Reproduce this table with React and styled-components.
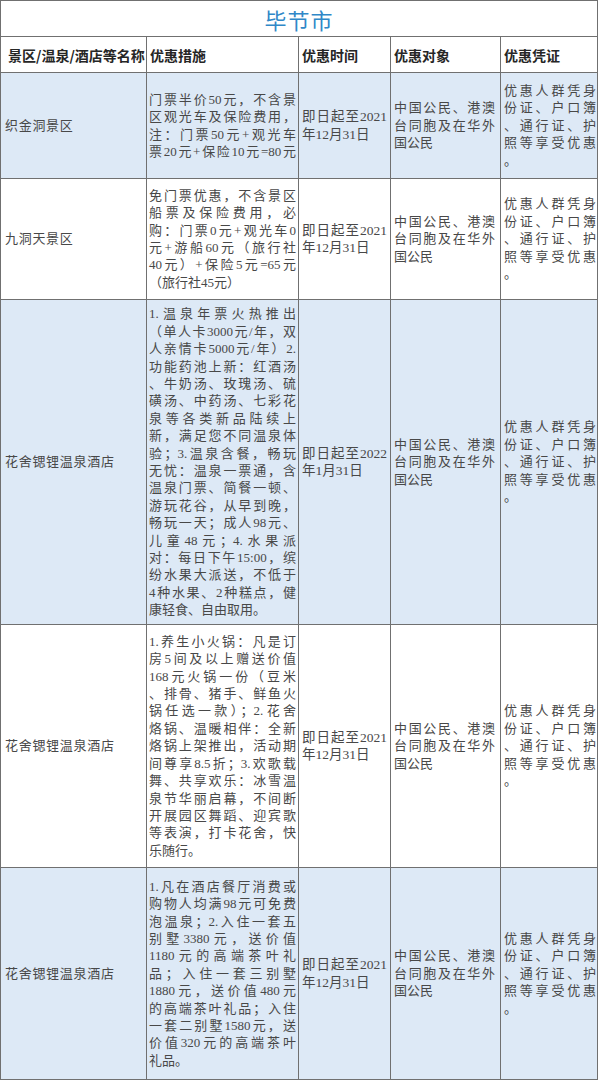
import React from "react";
import styled, { createGlobalStyle } from "styled-components";

const GlobalStyle = createGlobalStyle`
  body {
    margin: 0;
    background: #fff;
  }
`;

const Table = styled.div`
  display: grid;
  grid-template-columns: 145px 151px 91px 109px 96px;
  grid-template-rows: 35px 35px 105px 120px 324px 242px 211px;
  gap: 1px;
  padding: 1px;
  width: 598px;
  box-sizing: border-box;
  background: #707070;
  font-family: "Liberation Serif", "Noto Sans CJK SC", serif;
  color: #484848;
`;

const Title = styled.div`
  grid-column: 1 / -1;
  background: #fff;
  display: flex;
  align-items: center;
  justify-content: center;
  font-family: "Noto Sans CJK SC", sans-serif;
  font-size: 22px;
  letter-spacing: 1px;
  color: #3088c8;
`;

const HeadCell = styled.div`
  background: #fff;
  display: flex;
  align-items: center;
  padding: 0 3px;
  font-family: "Noto Sans CJK SC", sans-serif;
  font-weight: 700;
  font-size: 14px;
  color: #262626;
  white-space: nowrap;
  padding-left: ${(p) => (p.$first ? 7 : 3)}px;
`;

const Cell = styled.div`
  background: ${(p) => (p.$shade ? "#dde9f6" : "#fff")};
  display: flex;
  flex-direction: column;
  justify-content: center;
  padding: 0 ${(p) => p.$pr ?? 2}px 0 ${(p) => p.$pl ?? 2}px;
  font-size: 13px;
  line-height: 17.4px;
`;

const Name = styled.span`
  font-size: 13px;
  letter-spacing: 0.7px;
`;

const Line = styled.div`
  text-align: justify;
  text-align-last: ${(p) => (p.$left ? "left" : "justify")};
  font-size: ${(p) => p.$size ?? 13}px;
`;

const target = ["中国公民、港澳", "台同胞及在华外", "国公民"];
const voucher = ["优惠人群凭身", "份证、户口簿", "、通行证、护", "照等享受优惠", "。"];

const rows = [
  {
    name: "织金洞景区",
    shade: true,
    time: ["即日起至2021", "年12月31日"],
    measures: [
      "门票半价50元，不含景",
      "区观光车及保险费用，",
      "注：门票50元+观光车",
      "票20元+保险10元=80元",
    ],
    justifyLast: true,
  },
  {
    name: "九洞天景区",
    shade: false,
    time: ["即日起至2021", "年12月31日"],
    measures: [
      "免门票优惠，不含景区",
      "船票及保险费用，必",
      "购：门票0元+观光车0",
      "元+游船60元（旅行社",
      "40元）+保险5元=65元",
      "（旅行社45元）",
    ],
  },
  {
    name: "花舍锶锂温泉酒店",
    shade: true,
    time: ["即日起至2022", "年1月31日"],
    measures: [
      "1.温泉年票火热推出",
      "（单人卡3000元/年，双",
      "人亲情卡5000元/年）2.",
      "功能药池上新：红酒汤",
      "、牛奶汤、玫瑰汤、硫",
      "磺汤、中药汤、七彩花",
      "泉等各类新品陆续上",
      "新，满足您不同温泉体",
      "验；3.温泉含餐，畅玩",
      "无忧：温泉一票通，含",
      "温泉门票、简餐一顿、",
      "游玩花谷，从早到晚，",
      "畅玩一天；成人98元、",
      "儿童48元；4.水果派",
      "对：每日下午15:00，缤",
      "纷水果大派送，不低于",
      "4种水果、2种糕点，健",
      "康轻食、自由取用。",
    ],
  },
  {
    name: "花舍锶锂温泉酒店",
    shade: false,
    time: ["即日起至2021", "年12月31日"],
    measures: [
      "1.养生小火锅：凡是订",
      "房5间及以上赠送价值",
      "168元火锅一份（豆米",
      "、排骨、猪手、鲜鱼火",
      "锅任选一款）；2.花舍",
      "烙锅、温暖相伴：全新",
      "烙锅上架推出，活动期",
      "间尊享8.5折；3.欢歌载",
      "舞、共享欢乐：冰雪温",
      "泉节华丽启幕，不间断",
      "开展园区舞蹈、迎宾歌",
      "等表演，打卡花舍，快",
      "乐随行。",
    ],
  },
  {
    name: "花舍锶锂温泉酒店",
    shade: true,
    time: ["即日起至2021", "年12月31日"],
    measures: [
      "1.凡在酒店餐厅消费或",
      "购物人均满98元可免费",
      "泡温泉；2.入住一套五",
      "别墅3380元，送价值",
      "1180元的高端茶叶礼",
      "品；入住一套三别墅",
      "1880元，送价值480元",
      "的高端茶叶礼品；入住",
      "一套二别墅1580元，送",
      "价值320元的高端茶叶",
      "礼品。",
    ],
  },
];

function Lines({ items, justifyLast, size }) {
  return items.map((text, i) => (
    <Line key={i} $size={size} $left={i === items.length - 1 && !justifyLast}>
      {text}
    </Line>
  ));
}

export default function App() {
  return (
    <>
      <GlobalStyle />
      <Table>
        <Title>毕节市</Title>
        <HeadCell $first>景区/温泉/酒店等名称</HeadCell>
        <HeadCell>优惠措施</HeadCell>
        <HeadCell>优惠时间</HeadCell>
        <HeadCell>优惠对象</HeadCell>
        <HeadCell>优惠凭证</HeadCell>
        {rows.map((row, i) => (
          <React.Fragment key={i}>
            <Cell $shade={row.shade} $pl={4}>
              <Name>{row.name}</Name>
            </Cell>
            <Cell $shade={row.shade}>
              <Lines items={row.measures} justifyLast={row.justifyLast} />
            </Cell>
            <Cell $shade={row.shade} $pl={3} $pr={3}>
              <Lines items={row.time} size={13.5} />
            </Cell>
            <Cell $shade={row.shade} $pl={3} $pr={5}>
              <Lines items={target} />
            </Cell>
            <Cell $shade={row.shade} $pl={3} $pr={1}>
              <Lines items={voucher} />
            </Cell>
          </React.Fragment>
        ))}
      </Table>
    </>
  );
}
